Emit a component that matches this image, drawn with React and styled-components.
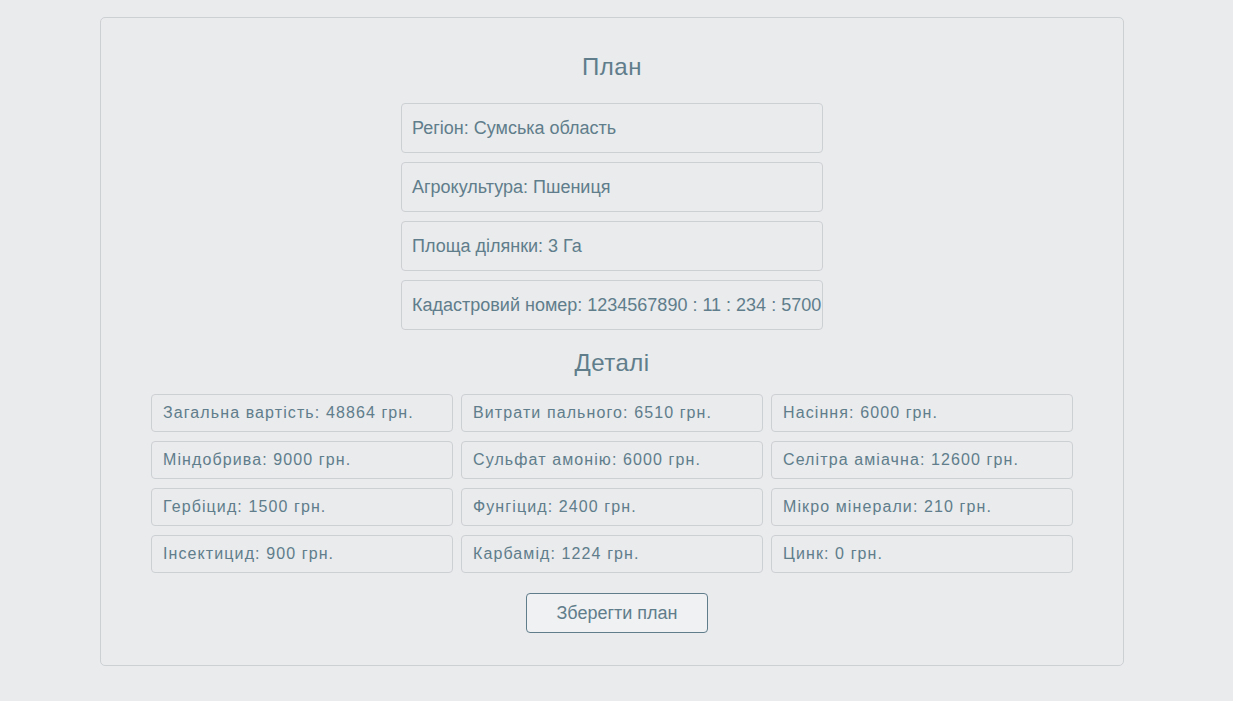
import React from 'react';
import styled, { createGlobalStyle } from 'styled-components';

const GlobalStyle = createGlobalStyle`
  body {
    margin: 0;
    background: #e9ebed;
    font-family: "Liberation Sans", Arial, sans-serif;
    color: #607d8b;
  }
`;

const Page = styled.div`
  padding-top: 17px;
  padding-left: 100px;
`;

const Card = styled.section`
  box-sizing: border-box;
  width: 1024px;
  border: 1px solid #cdd0d3;
  border-radius: 5px;
  padding: 35px 50px 32px;
  display: flex;
  flex-direction: column;
  align-items: center;
`;

const Title = styled.h2`
  margin: ${props => props.top || 0}px 0 ${props => props.bottom || 0}px;
  font-size: 24px;
  line-height: 28px;
  font-weight: normal;
  letter-spacing: 0.5px;
`;

const PlanList = styled.div`
  display: flex;
  flex-direction: column;
  gap: 9px;
  width: 422px;
`;

const PlanItem = styled.div`
  box-sizing: border-box;
  height: 50px;
  border: 1px solid #cdd0d3;
  border-radius: 4px;
  padding: 0 10px;
  display: flex;
  align-items: center;
  font-size: 18px;
  white-space: nowrap;
`;

const DetailsGrid = styled.div`
  display: grid;
  grid-template-columns: repeat(3, 1fr);
  gap: 9px 8px;
  width: 100%;
`;

const DetailItem = styled.div`
  box-sizing: border-box;
  height: 38px;
  border: 1px solid #cdd0d3;
  border-radius: 4px;
  padding: 0 11px;
  display: flex;
  align-items: center;
  font-size: 16px;
  letter-spacing: 1.1px;
  white-space: nowrap;
`;

const SaveButton = styled.button`
  margin: 20px 0 0 10px;
  width: 182px;
  height: 40px;
  border: 1px solid #607d8b;
  border-radius: 4px;
  background: #f0f1f2;
  color: #607d8b;
  font-family: "Liberation Sans", Arial, sans-serif;
  font-size: 18px;
  cursor: pointer;
`;

const plan = [
  'Регіон: Сумська область',
  'Агрокультура: Пшениця',
  'Площа ділянки: 3 Га',
  'Кадастровий номер: 1234567890 : 11 : 234 : 5700',
];

const details = [
  'Загальна вартість: 48864 грн.',
  'Витрати пального: 6510 грн.',
  'Насіння: 6000 грн.',
  'Міндобрива: 9000 грн.',
  'Сульфат амонію: 6000 грн.',
  'Селітра аміачна: 12600 грн.',
  'Гербіцид: 1500 грн.',
  'Фунгіцид: 2400 грн.',
  'Мікро мінерали: 210 грн.',
  'Інсектицид: 900 грн.',
  'Карбамід: 1224 грн.',
  'Цинк: 0 грн.',
];

export default function App() {
  return (
    <>
      <GlobalStyle />
      <Page>
        <Card>
          <Title bottom={22}>План</Title>
          <PlanList>
            {plan.map(p => <PlanItem key={p}>{p}</PlanItem>)}
          </PlanList>
          <Title top={19} bottom={17}>Деталі</Title>
          <DetailsGrid>
            {details.map(d => <DetailItem key={d}>{d}</DetailItem>)}
          </DetailsGrid>
          <SaveButton>Зберегти план</SaveButton>
        </Card>
      </Page>
    </>
  );
}
